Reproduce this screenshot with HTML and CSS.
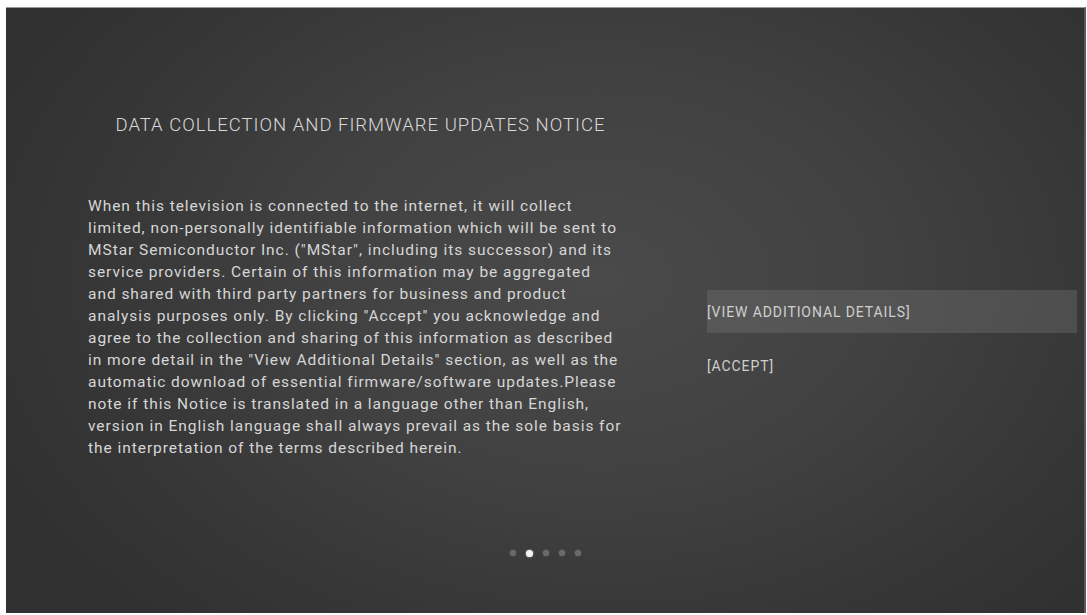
FILE: index.html
```html
<!DOCTYPE html>
<html>
<head>
<meta charset="utf-8">
<link rel="stylesheet" href="styles.css">
</head>
<body>
<div class="screen">
  <div class="main">
    <div class="left">
      <h1 class="title">DATA COLLECTION AND FIRMWARE UPDATES NOTICE</h1>
      <p class="notice">When this television is connected to the internet, it will collect<br>limited, non-personally identifiable information which will be sent to<br>MStar Semiconductor Inc. ("MStar", including its successor) and its<br>service providers. Certain of this information may be aggregated<br>and shared with third party partners for business and product<br>analysis purposes only. By clicking "Accept" you acknowledge and<br>agree to the collection and sharing of this information as described<br>in more detail in the "View Additional Details" section, as well as the<br>automatic download of essential firmware/software updates.Please<br>note if this Notice is translated in a language other than English,<br>version in English language shall always prevail as the sole basis for<br>the interpretation of the terms described herein.</p>
    </div>
    <div class="right">
      <div class="option selected">[VIEW ADDITIONAL DETAILS]</div>
      <div class="option">[ACCEPT]</div>
    </div>
  </div>
  <div class="dots">
    <span class="dot"></span>
    <span class="dot active"></span>
    <span class="dot"></span>
    <span class="dot"></span>
    <span class="dot"></span>
  </div>
</div>
</body>
</html>
```
FILE: styles.css
```css
html, body {
  margin: 0;
  padding: 0;
  background: #ffffff;
}
body {
  width: 1087px;
  height: 615px;
  overflow: hidden;
  font-family: Roboto, "Liberation Sans", sans-serif;
}
.screen {
  margin: 7px 1px 2px 6px;
  height: 606px;
  display: flex;
  flex-direction: column;
  background: radial-gradient(ellipse 60% 75% at 55% 45%, #4a4a4a 0%, #414141 45%, #363636 80%, #313131 100%);
  border-top: 1px solid #9a9a9a;
  box-sizing: border-box;
  border-right: 2px solid #5a5a5a;
}
.main {
  flex: 1;
  display: flex;
  align-items: flex-start;
}
.left {
  padding-left: 82px;
  padding-top: 107px;
  width: 545px;
}
.title {
  margin: 0;
  font-size: 18.5px;
  line-height: 20px;
  font-weight: 300;
  letter-spacing: 1px;
  color: #d8d8d8;
  text-align: center;
  white-space: nowrap;
}
.notice {
  margin: 60px 0 0 0;
  font-size: 15.5px;
  line-height: 22px;
  font-weight: 400;
  letter-spacing: 0.95px;
  color: #d6d6d6;
  white-space: nowrap;
}
.right {
  margin-left: 74px;
  padding-top: 282px;
  width: 370px;
  display: flex;
  flex-direction: column;
  gap: 11px;
}
.option {
  height: 43px;
  display: flex;
  align-items: center;
  font-size: 14px;
  color: #cfcfcf;
  letter-spacing: 0.9px;
}
.option.selected {
  background: rgba(120, 120, 120, 0.35);
}
.dots {
  display: flex;
  justify-content: center;
  align-items: center;
  gap: 10px;
  height: 8px;
  margin-bottom: 56px;
}
.dot {
  width: 6px;
  height: 6px;
  border-radius: 50%;
  background: #6a6a6a;
  box-shadow: 0 0 2px #6a6a6a;
}
.dot.active {
  width: 7px;
  height: 7px;
  background: #f2f2f2;
  box-shadow: 0 0 2px #cccccc;
}
```
